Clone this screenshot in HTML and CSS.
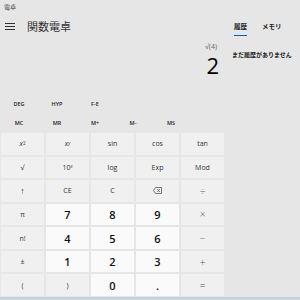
FILE: index.html
```html
<!DOCTYPE html>
<html lang="ja">
<head>
	<meta charset="UTF-8">
	<title>電卓</title>
	<link rel="stylesheet" href="styles.css">
</head>
<body>
	<div class="titlebar">電卓</div>
	<div class="app">
		<div class="calc">
			<header class="head">
				<span class="menu">
					<i></i><i></i><i></i>
				</span>
				<span class="mode-title">関数電卓</span>
			</header>
			<div class="display">
				<div class="expr">√(4)</div>
				<div class="result">2</div>
			</div>
			<div class="flags">
				<span>DEG</span>
				<span>HYP</span>
				<span>F-E</span>
			</div>
			<div class="memory">
				<span>MC</span>
				<span>MR</span>
				<span>M+</span>
				<span>M-</span>
				<span>MS</span>
			</div>
			<div class="keys">
				<button><i>x</i><sup>2</sup></button>
				<button><i>x</i><sup><i>y</i></sup></button>
				<button>sin</button>
				<button>cos</button>
				<button>tan</button>

				<button>√</button>
				<button>10<sup><i>x</i></sup></button>
				<button>log</button>
				<button>Exp</button>
				<button>Mod</button>

				<button class="arrow">↑</button>
				<button>CE</button>
				<button>C</button>
				<button>
					<svg width="9" height="7" viewBox="0 0 9 7"><path d="M2.5 0.5h6v6h-6l-2-3z" fill="none" stroke="#555" stroke-width="0.8"/><path d="M4.3 2l2.6 3M6.9 2l-2.6 3" stroke="#555" stroke-width="0.7"/></svg>
				</button>
				<button class="op">÷</button>

				<button>π</button>
				<button class="num">7</button>
				<button class="num">8</button>
				<button class="num">9</button>
				<button class="op">×</button>

				<button>n!</button>
				<button class="num">4</button>
				<button class="num">5</button>
				<button class="num">6</button>
				<button class="op">−</button>

				<button>±</button>
				<button class="num">1</button>
				<button class="num">2</button>
				<button class="num">3</button>
				<button class="op">+</button>

				<button>(</button>
				<button>)</button>
				<button class="num">0</button>
				<button class="num">.</button>
				<button class="op">=</button>
			</div>
		</div>
		<aside class="side">
			<div class="tabs">
				<span class="tab active">履歴</span>
				<span class="tab">メモリ</span>
			</div>
			<p class="empty">まだ履歴がありません</p>
		</aside>
	</div>
	<div class="bottom-line"></div>
</body>
</html>
```
FILE: styles.css
```css
html,
body {
	margin: 0;
	width: 300px;
	height: 300px;
	overflow: hidden;
	background: #e6e6e6;
	color: #1f1f1f;
	font-family: 'Open Sans', 'Noto Sans CJK JP', sans-serif;
}

.titlebar {
	height: 12px;
	padding-left: 4px;
	font-size: 6px;
	line-height: 14px;
	color: #333;
}

.app {
	display: flex;
	height: 285px;
}

.calc {
	width: 226px;
	display: flex;
	flex-direction: column;
}

.head {
	display: flex;
	align-items: center;
	height: 28px;
}

.menu {
	display: flex;
	flex-direction: column;
	gap: 2px;
	width: 10px;
	margin: 0 12px 0 5px;
}

.menu i {
	display: block;
	height: 1px;
	background: #333;
}

.mode-title {
	font-family: 'Noto Sans CJK JP', sans-serif;
	font-size: 11px;
	color: #333;
}

.display {
	height: 55px;
	padding-right: 7px;
	text-align: right;
}

.expr {
	margin-top: 2px;
	font-size: 7px;
	color: #666;
	height: 10px;
	padding-right: 2px;
}

.result {
	font-size: 22px;
	line-height: 26px;
	font-weight: 500;
	color: #000;
}

.flags,
.memory {
	display: grid;
	grid-template-columns: repeat(5, 38px);
	align-items: center;
	font-size: 5.5px;
	font-weight: 600;
	color: #222;
	text-align: center;
}

.flags {
	height: 18px;
}

.memory {
	height: 20px;
}

.keys {
	display: grid;
	grid-template-columns: repeat(5, 43px);
	grid-template-rows: repeat(7, 1fr);
	gap: 2px;
	height: 163px;
	padding-left: 1px;
}

.keys button {
	border: 0 none;
	margin: 0;
	padding: 0;
	background: #f0f0f0;
	font-family: 'Open Sans', sans-serif;
	font-size: 7px;
	color: #333;
	display: flex;
	align-items: center;
	justify-content: center;
}

.keys button sup {
	font-size: 4.5px;
	line-height: 0;
	position: relative;
	top: -1px;
}

.keys .num {
	background: #fafafa;
	font-size: 11px;
	font-weight: 600;
	color: #111;
}

.keys .op {
	font-size: 10px;
	color: #555;
	font-weight: 300;
}

.keys .arrow {
	font-size: 9px;
}

.side {
	flex: 1;
	padding-left: 6px;
}

.tabs {
	display: flex;
	gap: 15px;
	padding-left: 2px;
	margin-top: 9px;
}

.tab {
	font-family: 'Noto Sans CJK JP', sans-serif;
	font-size: 6.5px;
	font-weight: 700;
	color: #222;
	padding-bottom: 4px;
	border-bottom: 1px solid transparent;
}

.tab.active {
	border-bottom-color: #0063b1;
}

.empty {
	margin: 14px 0 0;
	font-family: 'Noto Sans CJK JP', sans-serif;
	font-size: 6px;
	font-weight: 700;
	color: #222;
	white-space: nowrap;
}

.bottom-line {
	height: 3px;
	background: #c4d3e0;
}
```
